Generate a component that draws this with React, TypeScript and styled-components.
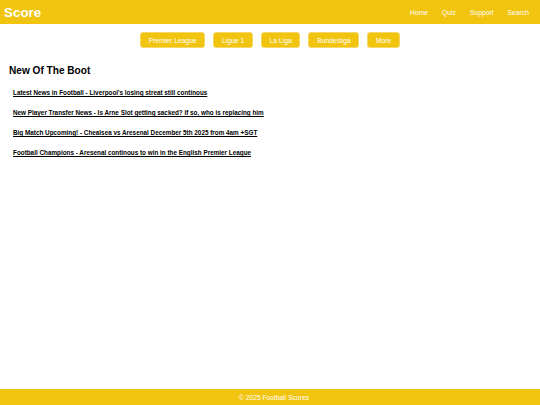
import React from "react";
import styled, { createGlobalStyle } from "styled-components";

const Global = createGlobalStyle`
  html, body { margin: 0; padding: 0; }
  body { font-family: "Liberation Sans", Arial, sans-serif; background: #fff; }
  * { box-sizing: border-box; }
`;

const Page = styled.div`
  min-height: 100vh;
  display: flex;
  flex-direction: column;
`;

const Header = styled.header`
  height: 24px;
  background: #f1c40f;
  display: flex;
  align-items: center;
  justify-content: space-between;
  padding: 0 11px 0 4px;
`;

const Logo = styled.div`
  color: #fff;
  font-weight: bold;
  font-size: 13.4px;
`;

const Nav = styled.nav`
  display: flex;
  gap: 14px;
`;

const NavLink = styled.a`
  color: #fff;
  font-size: 6.75px;
  text-decoration: none;
`;

const LeagueBar = styled.div`
  display: flex;
  justify-content: center;
  gap: 8px;
  margin-top: 8px;
`;

const LeagueButton = styled.button`
  height: 16px;
  padding: 0 7.7px;
  background: #f1c40f;
  color: #fff;
  border: 1px solid #f6d86a;
  border-radius: 3px;
  font-family: "Liberation Sans", Arial, sans-serif;
  font-size: 6.75px;
  cursor: pointer;
`;

const Main = styled.main`
  padding: 0 9px;
`;

const Title = styled.h2`
  margin: 17px 0 0;
  font-size: 10.1px;
  font-weight: bold;
  color: #000;
  line-height: 12px;
`;

const NewsList = styled.ul`
  list-style: none;
  margin: 12px 0 0;
  padding: 0 0 0 4px;
  display: flex;
  flex-direction: column;
  gap: 12.5px;
`;

const NewsLink = styled.a`
  display: block;
  color: #000;
  font-weight: bold;
  font-size: 6.35px;
  line-height: 7.5px;
  text-decoration: underline;
`;

const Footer = styled.footer`
  margin-top: auto;
  height: 16px;
  background: #f1c40f;
  color: #fff;
  font-size: 6.7px;
  display: flex;
  align-items: center;
  justify-content: center;
  padding-left: 8px;
`;

const navItems = ["Home", "Quiz", "Support", "Search"];
const leagues = ["Premier League", "Ligue 1", "La Liga", "Bundesliga", "More"];
const news = [
  "Latest News in Football - Liverpool's losing streat still continous",
  "New Player Transfer News - Is Arne Slot getting sacked? If so, who is replacing him",
  "Big Match Upcoming! - Chealsea vs Aresenal December 5th 2025 from 4am +SGT",
  "Football Champions - Aresenal continous to win in the English Premier League",
];

export default function App() {
  return (
    <Page>
      <Global />
      <Header>
        <Logo>Score</Logo>
        <Nav>
          {navItems.map((n) => (
            <NavLink key={n} href="#">{n}</NavLink>
          ))}
        </Nav>
      </Header>
      <LeagueBar>
        {leagues.map((l) => (
          <LeagueButton key={l}>{l}</LeagueButton>
        ))}
      </LeagueBar>
      <Main>
        <Title>New Of The Boot</Title>
        <NewsList>
          {news.map((n) => (
            <li key={n}>
              <NewsLink href="#">{n}</NewsLink>
            </li>
          ))}
        </NewsList>
      </Main>
      <Footer>© 2025 Football Scores</Footer>
    </Page>
  );
}
